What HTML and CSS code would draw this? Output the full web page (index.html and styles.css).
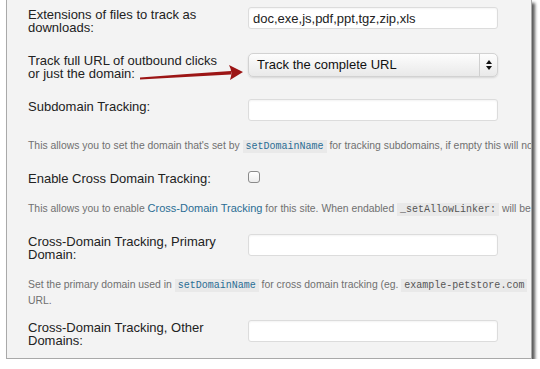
FILE: index.html
```html
<!DOCTYPE html>
<html lang="en">
<head>
    <meta charset="UTF-8">
    <title>Tracking Settings</title>
    <link rel="stylesheet" href="styles.css">
</head>
<body>

<div class="frame">
    <form class="settings">

        <!-- Downloads -->
        <div class="setting">
            <div class="row">
                <label for="ext">Extensions of files to track as downloads:</label>
                <input type="text" id="ext" class="text-input" value="doc,exe,js,pdf,ppt,tgz,zip,xls">
            </div>
        </div>

        <!-- Outbound clicks -->
        <div class="setting">
            <div class="row">
                <label>Track full URL of outbound clicks or just the domain:</label>
                <div class="select">
                    <span class="select-value">Track the complete URL</span>
                    <span class="select-arrows"><i class="up"></i><i class="down"></i></span>
                </div>
            </div>
        </div>

        <!-- Subdomain -->
        <div class="setting has-desc">
            <div class="row">
                <label for="subdomain">Subdomain Tracking:</label>
                <input type="text" id="subdomain" class="text-input">
            </div>
            <p class="desc">This allows you to set the domain that's set by <code class="blue">setDomainName</code> for tracking subdomains, if empty this will not be used.</p>
        </div>

        <!-- Cross domain -->
        <div class="setting has-desc">
            <div class="row">
                <label for="cross">Enable Cross Domain Tracking:</label>
                <span class="checkbox" id="cross"></span>
            </div>
            <p class="desc short">This allows you to enable <a href="#">Cross-Domain Tracking</a> for this site. When endabled <code>_setAllowLinker:</code> will be set.</p>
        </div>

        <div class="setting has-desc tight">
            <div class="row">
                <label for="primary">Cross-Domain Tracking, Primary Domain:</label>
                <input type="text" id="primary" class="text-input">
            </div>
            <p class="desc wrap">Set the primary domain used in <code class="blue">setDomainName</code> for cross domain tracking (eg. <code>example-petstore.com</code><br>URL.</p>
        </div>

        <div class="setting">
            <div class="row">
                <label for="other">Cross-Domain Tracking, Other Domains:</label>
                <input type="text" id="other" class="text-input">
            </div>
        </div>

    </form>

    <!-- red annotation arrow -->
    <svg class="arrow" width="110" height="24" viewBox="0 0 110 24">
        <path d="M0 17.5 Q45 14 91 11 L91 14.5 Q45 17 0 19.5 Z" fill="#9c1515"/>
        <path d="M89 5 L103 12 L90 20 Q93 12.5 89 5 Z" fill="#9c1515"/>
    </svg>
</div>

</body>
</html>
```

FILE: styles.css
```css
body {
    margin: 0;
    background-color: #fff;
    font-family: "Liberation Sans", Arial, Helvetica, sans-serif;
}
.frame {
    position: relative;
    box-sizing: border-box;
    width: 526px;
    height: 359px;
    margin-left: 6px;
    padding: 7px 0 0 21px;
    background-color: #f3f3f3;
    border: 1px solid #a9a9a9;
    border-top: none;
    box-shadow: 3px 3px 3px rgba(0, 0, 0, 0.65);
    overflow: hidden;
}
.settings {
    width: 600px;
}
.setting {
    margin-bottom: 19px;
}
.setting.has-desc {
    margin-bottom: 17px;
}
.setting.tight {
    margin-bottom: 12px;
}
.row {
    display: grid;
    grid-template-columns: 220px 250px;
    align-items: start;
}
.row label {
    padding: 1px 22px 0 0;
    font-size: 13px;
    line-height: 13px;
    color: #222;
}
.text-input {
    box-sizing: border-box;
    width: 250px;
    height: 22px;
    margin: 0;
    padding: 0 4px;
    border: 1px solid #dcdcdc;
    border-radius: 3px;
    background-color: #fff;
    box-shadow: inset 0 1px 2px rgba(0, 0, 0, 0.05);
    font-family: "Liberation Sans", Arial, sans-serif;
    font-size: 13px;
    color: #222;
}
.select {
    box-sizing: border-box;
    display: flex;
    width: 250px;
    height: 24px;
    border: 1px solid #d2d2d2;
    border-radius: 5px;
    background: linear-gradient(#fdfdfd, #e9e9e9);
    box-shadow: 0 1px 2px rgba(0, 0, 0, 0.12);
}
.select-value {
    flex: 1;
    padding-left: 8px;
    font-size: 13px;
    line-height: 22px;
    color: #111;
}
.select-arrows {
    display: flex;
    flex-direction: column;
    align-items: center;
    justify-content: center;
    gap: 2px;
    width: 17px;
    border-left: 1px solid #d0d0d0;
}
.select-arrows i {
    width: 0;
    height: 0;
    border-left: 3px solid transparent;
    border-right: 3px solid transparent;
}
.select-arrows .up {
    border-bottom: 4px solid #111;
}
.select-arrows .down {
    border-top: 4px solid #111;
}
.checkbox {
    box-sizing: border-box;
    display: block;
    width: 12px;
    height: 12px;
    border: 1px solid #8a8a8a;
    border-radius: 3px;
    background: linear-gradient(#fff, #ececec);
}
.desc {
    margin: 17px 0 0;
    font-size: 10.4px;
    line-height: 15px;
    color: #707070;
    white-space: nowrap;
}
.desc.short {
    margin-top: 16px;
}
.desc.wrap {
    margin-top: 16px;
}
.desc a {
    font-size: 11px;
    color: #2a6d94;
    text-decoration: none;
}
code {
    padding: 1px 3px;
    background-color: #e9e9e9;
    font-family: "Liberation Mono", "Courier New", monospace;
    font-size: 10px;
    color: #555;
}
code.blue {
    color: #2a6d94;
}
.arrow {
    position: absolute;
    left: 133px;
    top: 60px;
}
```
